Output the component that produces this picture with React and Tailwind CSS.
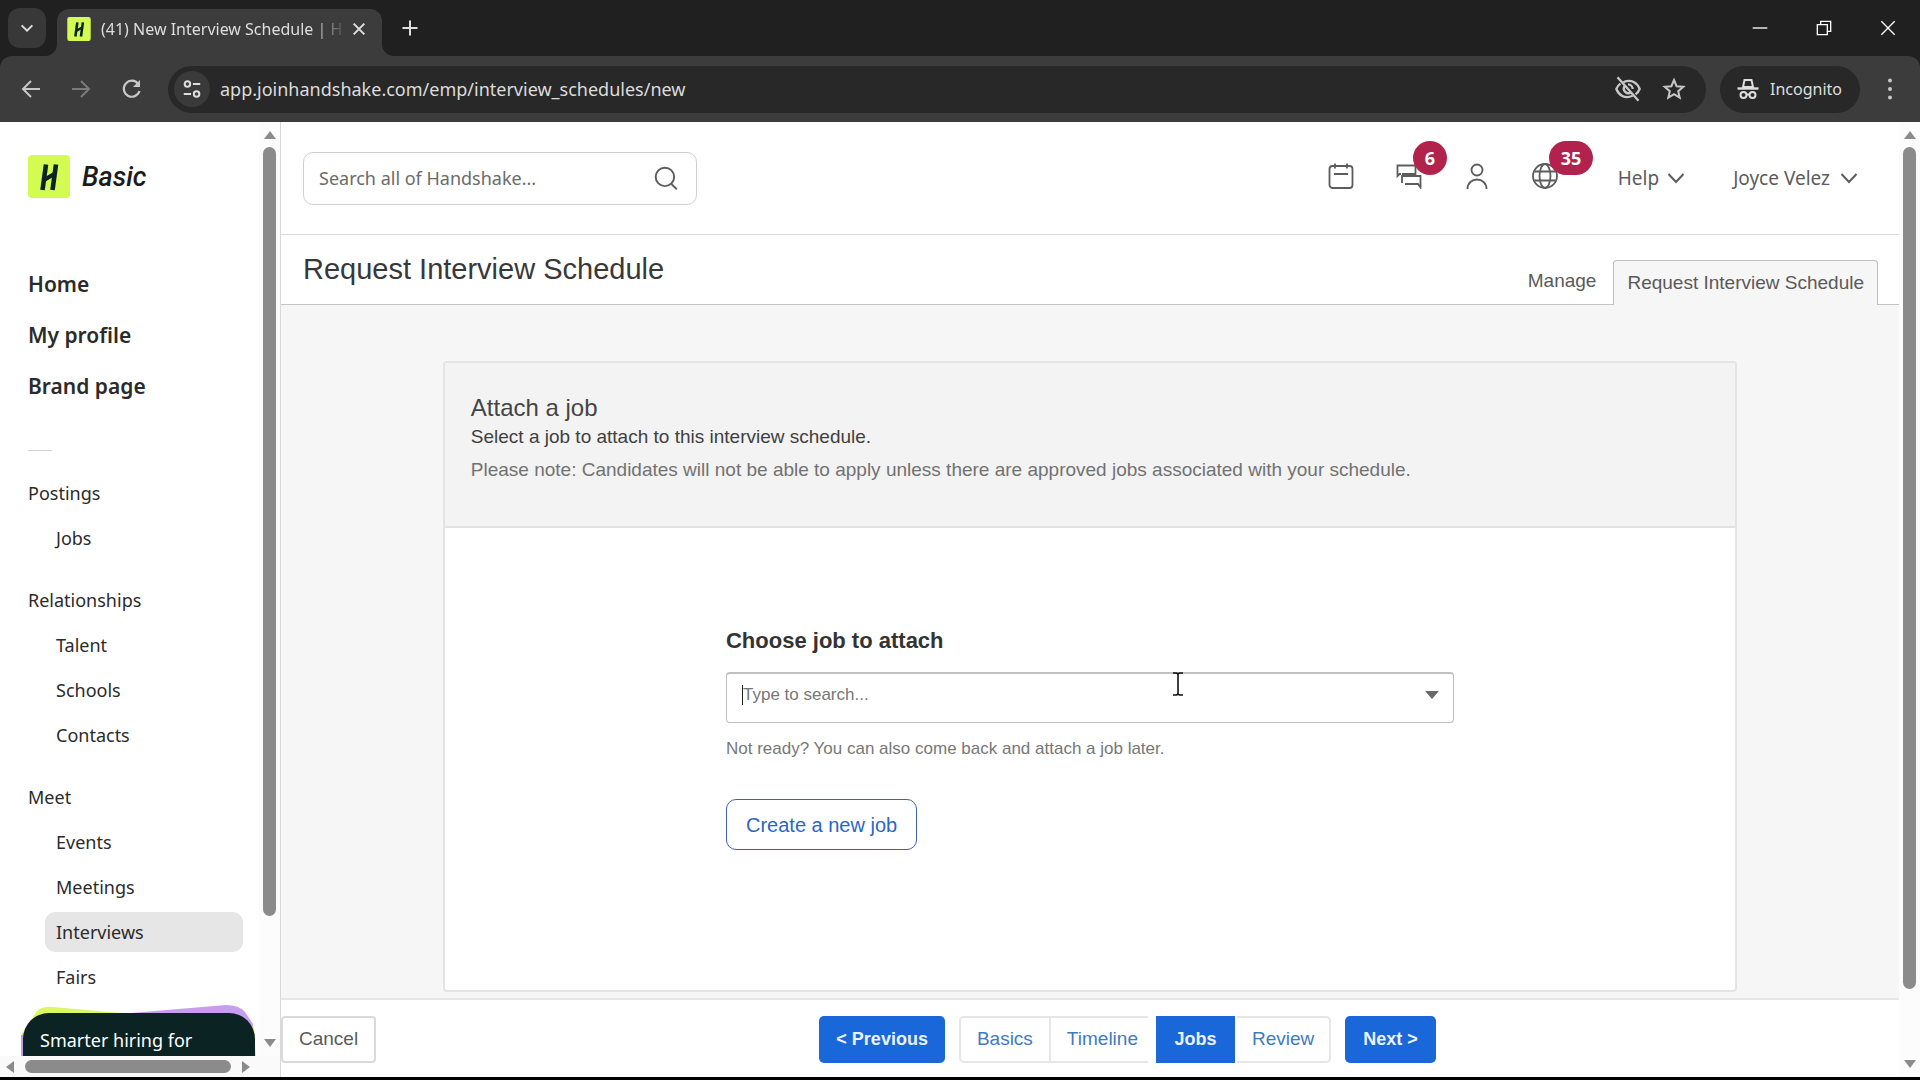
import React, { useState } from 'react';

const SANS = "font-['Liberation_Sans',Arial,sans-serif]";
const UI = "font-['Noto_Sans','Open_Sans',sans-serif]";

const topLinks = ['Home', 'My profile', 'Brand page'];

const groups = [
    { title: 'Postings', items: ['Jobs'] },
    { title: 'Relationships', items: ['Talent', 'Schools', 'Contacts'] },
    { title: 'Meet', items: ['Events', 'Meetings', 'Interviews', 'Fairs'] },
];

/* ---------- Icons ---------- */

const Icon = ({ className, children, strokeWidth = 2, viewBox = '0 0 24 24' }) => (
    <svg
        viewBox={viewBox}
        className={className}
        fill="none"
        stroke="currentColor"
        strokeWidth={strokeWidth}
        aria-hidden="true"
    >
        {children}
    </svg>
);

const LogoMark = ({ className }) => (
    <svg viewBox="0 0 42 43" className={className} aria-hidden="true">
        <rect width="42" height="43" rx="4" fill="#d3fb52" />
        <g stroke="#0b2323" strokeWidth="4.6">
            <line x1="18" y1="9.5" x2="14.5" y2="35" />
            <line x1="28" y1="9.5" x2="24.5" y2="35" />
            <line x1="16" y1="25" x2="27" y2="18.5" strokeWidth="4" />
        </g>
    </svg>
);

const Chevron = ({ className }) => (
    <Icon className={className} strokeWidth={2} viewBox="0 0 18 18">
        <path d="M1.5 5l7.5 8 7.5-8" />
    </Icon>
);

const Arrow = ({ dir, className = '' }) => {
    const shapes = {
        up: 'M7 3l6 8H1z',
        down: 'M7 11L1 3h12z',
        left: 'M3 7l8-6v12z',
        right: 'M11 7L3 13V1z',
    };
    return (
        <svg viewBox="0 0 14 14" className={`size-3.5 shrink-0 ${className}`} fill="#8b8b8b" aria-hidden="true">
            <path d={shapes[dir]} />
        </svg>
    );
};

/* ---------- Browser chrome ---------- */

const TabStrip = () => (
    <div className="flex h-14 items-end bg-[#202020] pl-2 text-[#dedede]">
        <button type="button" aria-label="Search tabs" className="mb-2 flex h-10 w-[38px] items-center justify-center rounded-xl bg-[#383838]">
            <Icon className="size-4" strokeWidth={3}>
                <path d="M4 8l8 8 8-8" />
            </Icon>
        </button>
        <div className="relative ml-[11px] flex h-[47px] w-[325px] items-center rounded-t-xl bg-[#3c3c3c] pr-[11px] pl-[10px]">
            <svg viewBox="0 0 12 12" className="absolute bottom-0 -left-3 size-3" fill="#3c3c3c" aria-hidden="true">
                <path d="M12 0v12H0A12 12 0 0 0 12 0z" />
            </svg>
            <svg viewBox="0 0 12 12" className="absolute -right-3 bottom-0 size-3" fill="#3c3c3c" aria-hidden="true">
                <path d="M0 0v12h12A12 12 0 0 1 0 0z" />
            </svg>
            <div className="-mt-2 flex w-full items-center">
                <LogoMark className="size-6 shrink-0" />
                <span className="ml-[10px] flex-1 text-[16px] leading-6 whitespace-nowrap [mask-image:linear-gradient(to_right,black_85%,transparent)]">
                    (41) New Interview Schedule | H
                </span>
                <button type="button" aria-label="Close tab" className="flex size-6 shrink-0 items-center justify-center">
                    <Icon className="size-4" strokeWidth={3}>
                        <path d="M4 4l16 16M20 4L4 20" />
                    </Icon>
                </button>
            </div>
        </div>
        <button type="button" aria-label="New tab" className="mb-4 ml-4 flex size-6 items-center justify-center">
            <Icon className="size-5" strokeWidth={2.4}>
                <path d="M12 3v18M3 12h18" />
            </Icon>
        </button>
        <div className="mb-4 ml-auto flex gap-10 pr-5 text-white">
            <button type="button" aria-label="Minimize" className="flex size-6 items-center justify-center">
                <Icon className="size-4">
                    <path d="M1 12h22" />
                </Icon>
            </button>
            <button type="button" aria-label="Restore" className="flex size-6 items-center justify-center">
                <Icon className="size-4">
                    <path d="M2 7h15v15H2zM7 7V2h15v15h-5" />
                </Icon>
            </button>
            <button type="button" aria-label="Close" className="flex size-6 items-center justify-center">
                <Icon className="size-4">
                    <path d="M2 2l20 20M22 2L2 22" />
                </Icon>
            </button>
        </div>
    </div>
);

const Toolbar = () => (
    <div className="bg-[#202020]">
        <div className="flex h-[66px] items-center rounded-t-xl bg-[#3c3c3c] pr-[18px] pl-[19px] text-[#c7c7c7]">
            <button type="button" aria-label="Back" className="size-6">
                <Icon className="size-6">
                    <path d="M21 12H4M12 4l-8 8 8 8" />
                </Icon>
            </button>
            <button type="button" aria-label="Forward" className="ml-[26px] size-6 text-[#7b7b7b]">
                <Icon className="size-6">
                    <path d="M3 12h17M12 4l8 8-8 8" />
                </Icon>
            </button>
            <button type="button" aria-label="Reload" className="ml-[27px] size-6">
                <Icon className="size-6" strokeWidth={2.2}>
                    <path d="M19.5 14a8 8 0 1 1-1.2-7" />
                    <path d="M20 3v7h-7z" fill="currentColor" stroke="none" />
                </Icon>
            </button>
            <div className="ml-6 flex h-[47px] flex-1 items-center rounded-full bg-[#282828] pr-5 pl-1.5">
                <button type="button" aria-label="View site information" className="flex size-9 items-center justify-center rounded-full bg-[#3a3a3a] text-[#dedede]">
                    <Icon className="size-[22px]" strokeWidth={2.2}>
                        <circle cx="7" cy="6.500" r="3" />
                        <path d="M13 6.500h8M3 17.500h8" />
                        <circle cx="17" cy="17.500" r="3" />
                    </Icon>
                </button>
                <input
                    type="text"
                    aria-label="Address"
                    defaultValue="app.joinhandshake.com/emp/interview_schedules/new"
                    className="ml-[10px] min-w-0 flex-1 bg-transparent text-[18px] text-[#dcdcdc] outline-none"
                />
                <Icon className="size-7" strokeWidth={2}>
                    <path d="M8 6.200C15 3 20 7 22 12c-.8 2-2 3.500-3.500 4.600M16 17.800C9 21 4 17 2 12c.8-2 2-3.500 3.500-4.600" />
                    <path d="M3 2l18 20M9 9.500a4 4 0 0 0 5.500 5.500M12 8a4 4 0 0 1 4 4" />
                </Icon>
                <button type="button" aria-label="Bookmark this page" className="ml-5 size-6">
                    <Icon className="size-6">
                        <path d="M12 3l2.600 6.200 6.700.6-5.100 4.400 1.500 6.500L12 17.200l-5.700 3.500 1.500-6.500-5.100-4.400 6.700-.6z" />
                    </Icon>
                </button>
            </div>
            <div className="ml-[14px] flex h-[47px] items-center rounded-full bg-[#282828] pr-[18px] pl-4 text-[16px] text-[#dedede]">
                <Icon className="size-6" strokeWidth={2}>
                    <path d="M7 10l1.500-7h7L17 10z" />
                    <path d="M1.500 11.500h21" strokeWidth="2.400" />
                    <circle cx="7.500" cy="18" r="3" />
                    <circle cx="16.500" cy="18" r="3" />
                    <path d="M10.500 17.500h3" />
                </Icon>
                <span className="ml-[10px]">Incognito</span>
            </div>
            <button type="button" aria-label="Browser menu" className="ml-[18px] size-6">
                <svg viewBox="0 0 24 24" className="size-6" fill="currentColor" aria-hidden="true">
                    <circle cx="12" cy="3.500" r="2" />
                    <circle cx="12" cy="12" r="2" />
                    <circle cx="12" cy="20.500" r="2" />
                </svg>
            </button>
        </div>
    </div>
);

/* ---------- Sidebar ---------- */

const Sidebar = ({ active, onSelect }) => (
    <aside className="flex w-[281px] shrink-0 flex-col border-r border-[#d9d9d9] text-[#2b2b2b]">
        <div className="flex min-h-0 flex-1">
            <nav className="flex min-w-0 flex-1 flex-col overflow-hidden pt-[33px] pl-7">
                <a href="#" className="flex shrink-0 items-center">
                    <LogoMark className="h-[43px] w-[42px]" />
                    <span className="ml-3 font-['Roboto',sans-serif] text-[27px] leading-10 font-medium text-[#1c1c1c] italic">
                        Basic
                    </span>
                </a>
                <ul className="mt-[61px] shrink-0">
                    {topLinks.map((name) => (
                        <li key={name} className="flex h-[51px] items-center text-[21px] font-semibold">
                            <a href="#">{name}</a>
                        </li>
                    ))}
                </ul>
                <hr className="mt-[38px] mb-[22px] w-6 shrink-0 border-[#d0d0d0]" />
                {groups.map((group) => (
                    <section key={group.title} className="mb-[22px] shrink-0 text-[18px]">
                        <h2 className="flex h-10 items-center">{group.title}</h2>
                        <ul>
                            {group.items.map((name) => (
                                <li key={name} className="mt-[5px] mr-4 ml-[17px]">
                                    <a
                                        href="#"
                                        onClick={() => onSelect(name)}
                                        className={`flex h-10 items-center rounded-[10px] pl-[11px] ${active === name ? 'bg-[#e6e6e6]' : ''}`}
                                    >
                                        {name}
                                    </a>
                                </li>
                            ))}
                        </ul>
                    </section>
                ))}
                <div className="relative -mt-1.5 mr-1 -ml-[5px] h-24 shrink-0 rounded-t-[26px] bg-[#0b2323] pt-3.5 pl-[17px] text-[18px] text-white">
                    <svg viewBox="0 0 236 52" className="absolute -top-2 -left-0.5 -z-10 h-[52px] w-[236px]" aria-hidden="true">
                        <path d="M0 52V30L16 6Q22 1 32 2L110 9V52z" fill="#dcf763" />
                        <path d="M110 8L205 0q13 0 19 7l8 12v33H110z" fill="#c79df0" />
                        <path d="M0 30h10v22H0z" fill="#c79df0" />
                        <path d="M226 22h7l2 30h-9z" fill="#dcf763" />
                    </svg>
                    Smarter hiring for
                </div>
            </nav>
            <div className="flex w-[21px] shrink-0 flex-col items-center bg-[#fcfcfc] py-1.5">
                <Arrow dir="up" />
                <div className="my-[5px] min-h-0 w-full flex-1">
                    <div className="mx-auto h-[87%] w-[13px] rounded-full bg-[#8b8b8b]" />
                </div>
                <Arrow dir="down" />
            </div>
        </div>
        <div className="flex h-[21px] items-center bg-[#fafafa] pr-[27px] pl-[3px]">
            <Arrow dir="left" />
            <div className="mx-2 h-[13px] flex-1 rounded-full bg-[#8b8b8b]" />
            <Arrow dir="right" />
        </div>
    </aside>
);

/* ---------- Page header ---------- */

const Badge = ({ children }) => (
    <span className="absolute bottom-3.5 left-[17px] flex h-[34px] min-w-[34px] items-center justify-center rounded-full bg-[#b1234d] px-3 text-[18px] font-bold text-white">
        {children}
    </span>
);

const Header = () => (
    <header className="flex h-[113px] shrink-0 items-center justify-between border-b border-[#dcdcdc] pr-[41px] pl-[22px] text-[#5c5c5c]">
        <form className="flex h-[53px] w-[394px] items-center rounded-[10px] border border-[#cfcfcf] bg-white pr-[17px] pl-[15px]">
            <input
                type="search"
                aria-label="Search all of Handshake"
                placeholder="Search all of Handshake..."
                className="min-w-0 flex-1 text-[18px] outline-none placeholder:text-[#6b6b6b]"
            />
            <button type="button" aria-label="Search">
                <Icon className="size-[26px]" strokeWidth={1.8}>
                    <circle cx="11" cy="11" r="8.500" />
                    <path d="M17 17.500l5 5" />
                </Icon>
            </button>
        </form>
        <div className="flex items-center text-[19px]">
            <div className="mb-1 flex gap-[42px]">
                <a href="#" aria-label="Calendar">
                    <Icon className="size-[26px]" viewBox="0 0 26 26" strokeWidth={1.8}>
                        <rect x="1.500" y="3" width="23" height="22" rx="3" />
                        <path d="M7 .5v5M19 .5v5M6 11h14" />
                    </Icon>
                </a>
                <a href="#" aria-label="Messages" className="relative">
                    <Icon className="size-[26px]" viewBox="0 0 26 26" strokeWidth={1.8}>
                        <path d="M5 11H3.500L1.500 13V2.500h18V11H6" />
                        <path d="M6 20V13h18.500v11.500L22 21H9" />
                    </Icon>
                    <Badge>6</Badge>
                </a>
                <a href="#" aria-label="Profile">
                    <Icon className="size-[26px]" viewBox="0 0 26 26" strokeWidth={1.8}>
                        <circle cx="13" cy="7" r="5.500" />
                        <path d="M3.500 26c0-6 4.500-9.500 9.500-9.500s9.500 3.500 9.500 9.500" />
                    </Icon>
                </a>
                <a href="#" aria-label="Notifications" className="relative">
                    <Icon className="size-[26px]" viewBox="0 0 26 26" strokeWidth={1.8}>
                        <circle cx="13" cy="13" r="12" />
                        <ellipse cx="13" cy="13" rx="5.500" ry="12" />
                        <path d="M2.500 8.500h21M2.500 17.500h21" />
                    </Icon>
                    <Badge>35</Badge>
                </a>
            </div>
            <button type="button" className="ml-[60px] flex items-center gap-2">
                Help <Chevron className="size-[18px]" />
            </button>
            <button type="button" className="ml-[48px] flex items-center gap-[10px]">
                Joyce Velez <Chevron className="size-[18px]" />
            </button>
        </div>
    </header>
);

const TitleBar = () => (
    <div className={`flex h-[70px] shrink-0 items-end justify-between border-b border-[#c4c4c4] pr-[21px] pl-[22px] ${SANS}`}>
        <h1 className="self-start pt-[14px] text-[29px] leading-10 text-[#383838]">Request Interview Schedule</h1>
        <div className="flex items-end text-[19px] text-[#5a5a5a]">
            <a href="#" className="flex h-[46px] items-center px-[17px]">Manage</a>
            <a
                href="#"
                aria-current="page"
                className="-mb-px flex h-[45px] items-center rounded-t-[4px] border border-b-0 border-[#bdbdbd] bg-[#f6f6f6] px-[13px]"
            >
                Request Interview Schedule
            </a>
        </div>
    </div>
);

/* ---------- Attach a job ---------- */

const JobCard = () => {
    const [query, setQuery] = useState('');

    return (
        <section className={`flex w-4/5 flex-1 flex-col rounded-[4px] border-2 border-[#e4e4e4] bg-white ${SANS}`}>
            <div className="h-[165px] shrink-0 border-b-2 border-[#e2e2e2] bg-[#f3f3f3] px-[26px] pt-[30px]">
                <h2 className="text-[24px] leading-[30px] text-[#454545]">Attach a job</h2>
                <p className="text-[19px] leading-7 text-[#404040]">Select a job to attach to this interview schedule.</p>
                <p className="mt-[5px] text-[19px] leading-7 text-[#727272]">
                    Please note: Candidates will not be able to apply unless there are approved jobs associated with your schedule.
                </p>
            </div>
            <div className="mx-auto w-[728px] pt-24">
                <label htmlFor="job" className="block text-[22px] leading-[34px] font-bold text-[#333333]">
                    Choose job to attach
                </label>
                <div className="relative mt-3.5 flex h-[51px] items-center rounded-[4px] border border-t-2 border-[#bfbfbf] pr-[14px] pb-1.5 pl-[15px]">
                    <span className="h-5 w-px bg-[#222222]" />
                    <input
                        id="job"
                        type="text"
                        value={query}
                        placeholder="Type to search..."
                        onChange={(e) => setQuery(e.target.value)}
                        className="min-w-0 flex-1 text-[17px] outline-none placeholder:text-[#777777]"
                    />
                    <svg viewBox="0 0 14 8" className="h-2 w-3.5" fill="#6a6a6a" aria-hidden="true">
                        <path d="M0 0h14L7 8z" />
                    </svg>
                    {/* text pointer over the field */}
                    <svg viewBox="0 0 10 24" className="absolute -top-0.5 left-[446px] h-6 w-2.5" fill="none" stroke="#111111" strokeWidth="1.600" aria-hidden="true">
                        <path d="M0 1h3.500L5 2l1.500-1H10M5 2v20M0 23h3.500L5 22l1.500 1H10" />
                    </svg>
                </div>
                <p className="mt-3.5 text-[17px] leading-6 text-[#777777]">Not ready? You can also come back and attach a job later.</p>
                <button type="button" className="mt-[38px] h-[51px] rounded-[10px] border border-[#3b62b5] px-[19px] text-[20px] text-[#2c66c4]">
                    Create a new job
                </button>
            </div>
        </section>
    );
};

const Footer = () => (
    <footer className={`flex h-[79px] shrink-0 items-center border-t-2 border-[#e6e6e6] pt-1.5 pb-1 text-[19px] ${SANS}`}>
        <button type="button" className="h-[47px] rounded-[4px] border-2 border-[#dadada] px-4 text-[#5a5a5a]">Cancel</button>
        <div className="flex h-[47px] flex-1 justify-center gap-3.5 pr-5 text-[#3f7ac2]">
            <button type="button" className="rounded-[5px] bg-[#1a67da] px-[17px] text-[18px] font-bold text-[#eaf2ff]">&lt; Previous</button>
            <div className="flex">
                <button type="button" className="rounded-l-[5px] border-2 border-[#e6e6e6] px-4">Basics</button>
                <button type="button" className="border-y-2 border-[#e6e6e6] pr-2.5 pl-4">Timeline</button>
                <button type="button" aria-current="step" className="ml-2 w-[79px] bg-[#1a67da] text-[18px] font-bold text-[#eaf2ff]">Jobs</button>
                <button type="button" className="ml-0.5 rounded-r-[5px] border-2 border-l-0 border-[#e6e6e6] px-[15px]">Review</button>
            </div>
            <button type="button" className="rounded-[5px] bg-[#1a67da] px-[18px] text-[18px] font-bold text-[#eaf2ff]">Next &gt;</button>
        </div>
    </footer>
);

const App = () => {
    const [active, setActive] = useState('Interviews');

    return (
        <div className={`flex h-screen flex-col overflow-hidden border-b-[3px] border-black bg-white ${UI}`}>
            <TabStrip />
            <Toolbar />
            <div className="isolate flex min-h-0 flex-1">
                <Sidebar active={active} onSelect={setActive} />
                <div className="flex min-w-0 flex-1 flex-col">
                    <Header />
                    <TitleBar />
                    <main className="flex min-h-0 flex-1 flex-col items-center bg-[#f6f6f6] pt-14 pb-1.5">
                        <JobCard />
                    </main>
                    <Footer />
                </div>
                <div className="flex w-[21px] shrink-0 flex-col items-center bg-[#fcfcfc] py-1.5">
                    <Arrow dir="up" />
                    <div className="my-[5px] min-h-0 w-full flex-1">
                        <div className="mx-auto h-[93%] w-[13px] rounded-full bg-[#8b8b8b]" />
                    </div>
                    <Arrow dir="down" />
                </div>
            </div>
        </div>
    );
};

export default App;
